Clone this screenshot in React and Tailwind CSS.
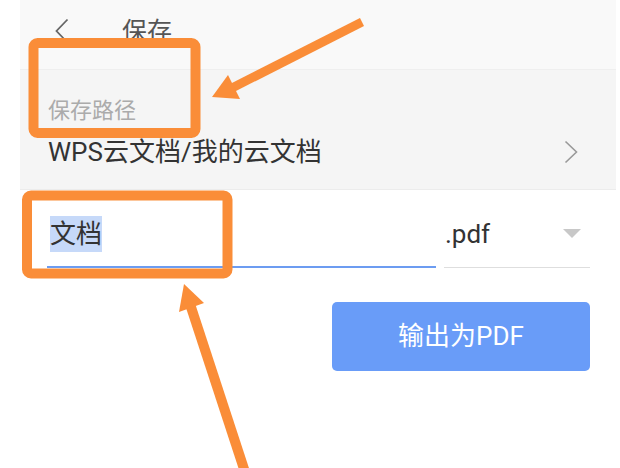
import React from 'react';

const ORANGE = '#fa8d38';

const Annotations = () => (
  <svg className="absolute inset-0 pointer-events-none" width="620" height="468" viewBox="0 0 620 468">
    {/* boxes */}
    <rect x="33.5" y="43" width="162" height="90" rx="4" fill="none" stroke={ORANGE} strokeWidth="10" />
    <rect x="27" y="195.5" width="200.5" height="78" rx="4" fill="none" stroke={ORANGE} strokeWidth="10" />
    {/* top arrow */}
    <line x1="362" y1="22" x2="232" y2="88" stroke={ORANGE} strokeWidth="9" />
    <polygon points="212,97 228,75 240,99" fill={ORANGE} />
    {/* bottom arrow */}
    <line x1="245" y1="472" x2="190" y2="304" stroke={ORANGE} strokeWidth="10" />
    <polygon points="184,284 204,303 179,312" fill={ORANGE} />
  </svg>
);

const App = () => {
  return (
    <div className="relative w-[620px] h-[468px] bg-white overflow-hidden font-['Roboto','Noto_Sans_CJK_SC',sans-serif]">
      <div className="ml-5 w-[596px]">
        {/* header */}
        <div className="h-[70px] bg-[#f9f9f9] border-b border-[#efefef]">
          <div className="h-[64px] flex items-center pl-[35px]">
            <svg className="-mt-[3px]" width="14" height="26" viewBox="0 0 14 26">
              <polyline points="12.5,1.5 1.5,13 12.5,24.5" fill="none" stroke="#666" strokeWidth="1.8" />
            </svg>
            <span className="ml-[53px] text-[25px] leading-[34px] text-[#555]">保存</span>
          </div>
        </div>

        {/* save path */}
        <div className="h-[120px] bg-[#f5f5f5] border-b border-[#ececec] pl-[28px] pr-[38px] pt-[26px]">
          <div className="text-[22px] leading-[30px] text-[#ababab]">保存路径</div>
          <div className="mt-[9px] h-[34px] flex items-center justify-between">
            <span className="text-[26px] leading-[34px] text-[#333]">WPS云文档/我的云文档</span>
            <svg width="14" height="24" viewBox="0 0 14 24">
              <polyline points="1.5,1.5 12.5,12 1.5,22.5" fill="none" stroke="#999" strokeWidth="1.6" />
            </svg>
          </div>
        </div>
      </div>

      {/* file name row */}
      <div className="mt-[16px] ml-[47px] flex gap-[8px]">
        <div className="w-[389px] h-[62px] pt-[10px] pl-[3px] border-b-2 border-[#6c9cf1]">
          <span className="text-[26px] leading-[36px] text-[#333] bg-[#c6d9f9] inline-block">文档</span>
        </div>
        <div className="w-[146px] h-[62px] pt-[10px] pl-[1px] pr-[9px] border-b border-[#dedede] flex items-start justify-between">
          <span className="text-[26px] leading-[36px] text-[#333]">.pdf</span>
          <svg className="mt-[13px]" width="18" height="9" viewBox="0 0 18 9">
            <polygon points="0,0 18,0 9,9" fill="#c8c8c8" />
          </svg>
        </div>
      </div>

      <button className="ml-[332px] mt-[34px] w-[258px] h-[69px] rounded-[5px] bg-[#699cf8] text-white text-[26px] flex items-center justify-center">
        输出为PDF
      </button>

      <Annotations />
    </div>
  );
};

export default App;
